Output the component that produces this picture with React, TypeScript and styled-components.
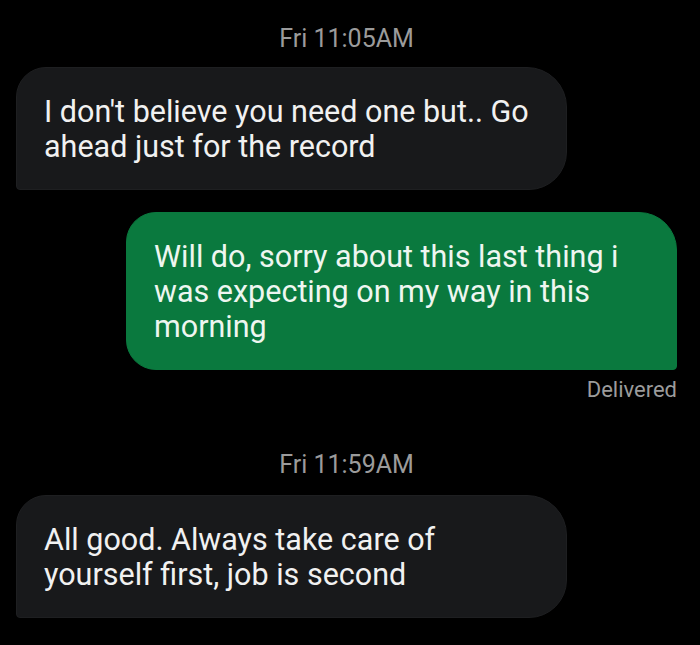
import styled, { createGlobalStyle } from "styled-components";

const GlobalStyle = createGlobalStyle`
  html, body {
    margin: 0;
    padding: 0;
    background: #000;
  }
  body {
    font-family: Roboto, "Noto Sans", "Liberation Sans", sans-serif;
  }
`;

const Thread = styled.div`
  width: 700px;
  height: 645px;
  box-sizing: border-box;
  padding: 24px 23px 0 16px;
  display: flex;
  flex-direction: column;
  background: #000;
  overflow: hidden;
`;

const Timestamp = styled.div<{ $top?: number }>`
  margin-top: ${(p) => p.$top ?? 0}px;
  margin-bottom: 13px;
  text-align: center;
  font-size: 25px;
  line-height: 30px;
  color: #9b9b9b;
`;

const Bubble = styled.div<{ $mine?: boolean; $top?: number }>`
  box-sizing: border-box;
  width: 551px;
  margin-top: ${(p) => p.$top ?? 0}px;
  align-self: ${(p) => (p.$mine ? "flex-end" : "flex-start")};
  padding: 26px 26px 25px 27px;
  font-size: 30.5px;
  line-height: 35px;
  color: ${(p) => (p.$mine ? "#eef6f0" : "#f1f1f1")};
  background: ${(p) => (p.$mine ? "#0a793e" : "#18191b")};
  border: 1px solid ${(p) => (p.$mine ? "#0a793e" : "#1e1f21")};
  border-radius: ${(p) =>
    p.$mine ? "30px 38px 4px 30px" : "30px 40px 38px 4px"};
`;

const Status = styled.div`
  align-self: flex-end;
  margin-top: 7px;
  font-size: 22px;
  line-height: 26px;
  color: #9b9b9b;
`;

export default function App() {
  return (
    <>
      <GlobalStyle />
      <Thread>
        <Timestamp>Fri 11:05AM</Timestamp>
        <Bubble>I don't believe you need one but.. Go ahead just for the record</Bubble>
        <Bubble $mine $top={22}>
          Will do, sorry about this last thing i was expecting on my way in this morning
        </Bubble>
        <Status>Delivered</Status>
        <Timestamp $top={47}>Fri 11:59AM</Timestamp>
        <Bubble $top={2}>All good. Always take care of yourself first, job is second</Bubble>
      </Thread>
    </>
  );
}
